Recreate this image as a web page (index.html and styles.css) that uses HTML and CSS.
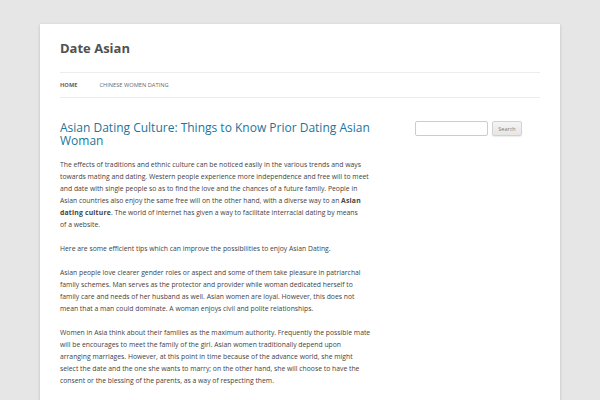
FILE: index.html
```html
<!DOCTYPE html>
<html lang="en">
<head>
<meta charset="utf-8">
<title>Date Asian</title>
<link rel="stylesheet" href="styles.css">
</head>
<body>
<div class="site">
  <header class="site-header">
    <h1 class="site-title"><a href="#">Date Asian</a></h1>
    <nav class="main-navigation">
      <ul class="menu">
        <li class="current"><a href="#">Home</a></li>
        <li><a href="#">Chinese Women Dating</a></li>
      </ul>
    </nav>
  </header>
  <div class="main">
    <article class="site-content">
      <h2 class="entry-title"><a href="#">Asian Dating Culture: Things to Know Prior Dating Asian Woman</a></h2>
      <div class="entry-content">
        <p>The effects of traditions and ethnic culture can be noticed easily in the various trends and ways towards mating and dating. Western people experience more independence and free will to meet and date with single people so as to find the love and the chances of a future family. People in Asian countries also enjoy the same free will on the other hand, with a diverse way to an <strong>Asian dating culture</strong>. The world of internet has given a way to facilitate interracial dating by means of&nbsp;a&nbsp;website.</p>
        <p>Here are some efficient tips which can improve the possibilities to enjoy Asian Dating.</p>
        <p>Asian people love clearer gender roles or aspect and some of them take pleasure in patriarchal family schemes. Man serves as the protector and provider while woman dedicated herself to family care and needs of her husband as well. Asian women are loyal. However, this does not mean that a man could dominate. A woman enjoys civil and polite relationships.</p>
        <p>Women in Asia think about their families as the maximum authority. Frequently the possible mate will be encourages to meet the family of the girl. Asian women traditionally depend upon arranging marriages. However, at this point in time because of the advance world, she might select the date and the one she wants to marry; on the other hand, she will choose to have the consent or the blessing of the parents, as a way of respecting them.</p>
        <p>Asian dating is not hard to differ from other ones, so it helps to know more about her culture and traditions before you start.</p>
      </div>
    </article>
    <aside class="widget-area">
      <form class="search-form">
        <input class="search-input" type="text" aria-label="Search">
        <button class="search-button" type="button">Search</button>
      </form>
    </aside>
  </div>
</div>
</body>
</html>
```
FILE: styles.css
```css
html, body {
  margin: 0;
  padding: 0;
}
body {
  background: #e6e6e6;
  font-family: "Open Sans", "DejaVu Sans", sans-serif;
  color: #444;
}
.site {
  max-width: 480px;
  margin: 24px auto;
  padding: 0 20px;
  background: #fff;
  box-shadow: 0 1px 3px rgba(100, 100, 100, 0.3);
}
.site-header {
  padding: 12px 0;
}
.site-title {
  margin: 0;
  font-size: 13px;
  line-height: 24px;
  font-weight: 700;
}
.site-title a {
  color: #515151;
  text-decoration: none;
}
.main-navigation {
  margin-top: 12px;
}
.menu {
  list-style: none;
  margin: 0;
  padding: 0;
  display: flex;
  border-top: 1px solid #ededed;
  border-bottom: 1px solid #ededed;
}
.menu li {
  margin-right: 22px;
  font-size: 5.7px;
  line-height: 24px;
  text-transform: uppercase;
}
.menu li a {
  color: #6a6a6a;
  text-decoration: none;
}
.menu li.current a {
  color: #636363;
  font-weight: 700;
}
.main {
  display: flex;
  justify-content: space-between;
  align-items: flex-start;
}
.site-content {
  width: 312.5px;
  margin-top: 11px;
}
.entry-title {
  margin: 0 0 12px;
  font-size: 12px;
  line-height: 13px;
  font-weight: 400;
}
.entry-title a {
  color: #21759b;
  text-decoration: none;
}
.entry-content p {
  margin: 0 0 12px;
  font-size: 6.82px;
  line-height: 12px;
}
.entry-content strong {
  font-weight: 700;
  letter-spacing: 0.2px;
}
.widget-area {
  width: 125px;
  margin-top: 11px;
}
.search-form {
  display: flex;
  align-items: center;
  gap: 4px;
}
.search-input {
  box-sizing: border-box;
  width: 73px;
  height: 15px;
  margin: 0;
  padding: 3px;
  border: 1px solid #ccc;
  border-radius: 2px;
  background: #fff;
}
.search-button {
  box-sizing: border-box;
  width: 30px;
  height: 15px;
  margin: 0;
  padding: 0;
  font-family: inherit;
  font-size: 5.5px;
  color: #7c7c7c;
  background: linear-gradient(#f4f4f4, #e6e6e6);
  border: 1px solid #d2d2d2;
  border-radius: 2px;
  box-shadow: 0 1px 1px rgba(64, 64, 64, 0.1);
}
```
